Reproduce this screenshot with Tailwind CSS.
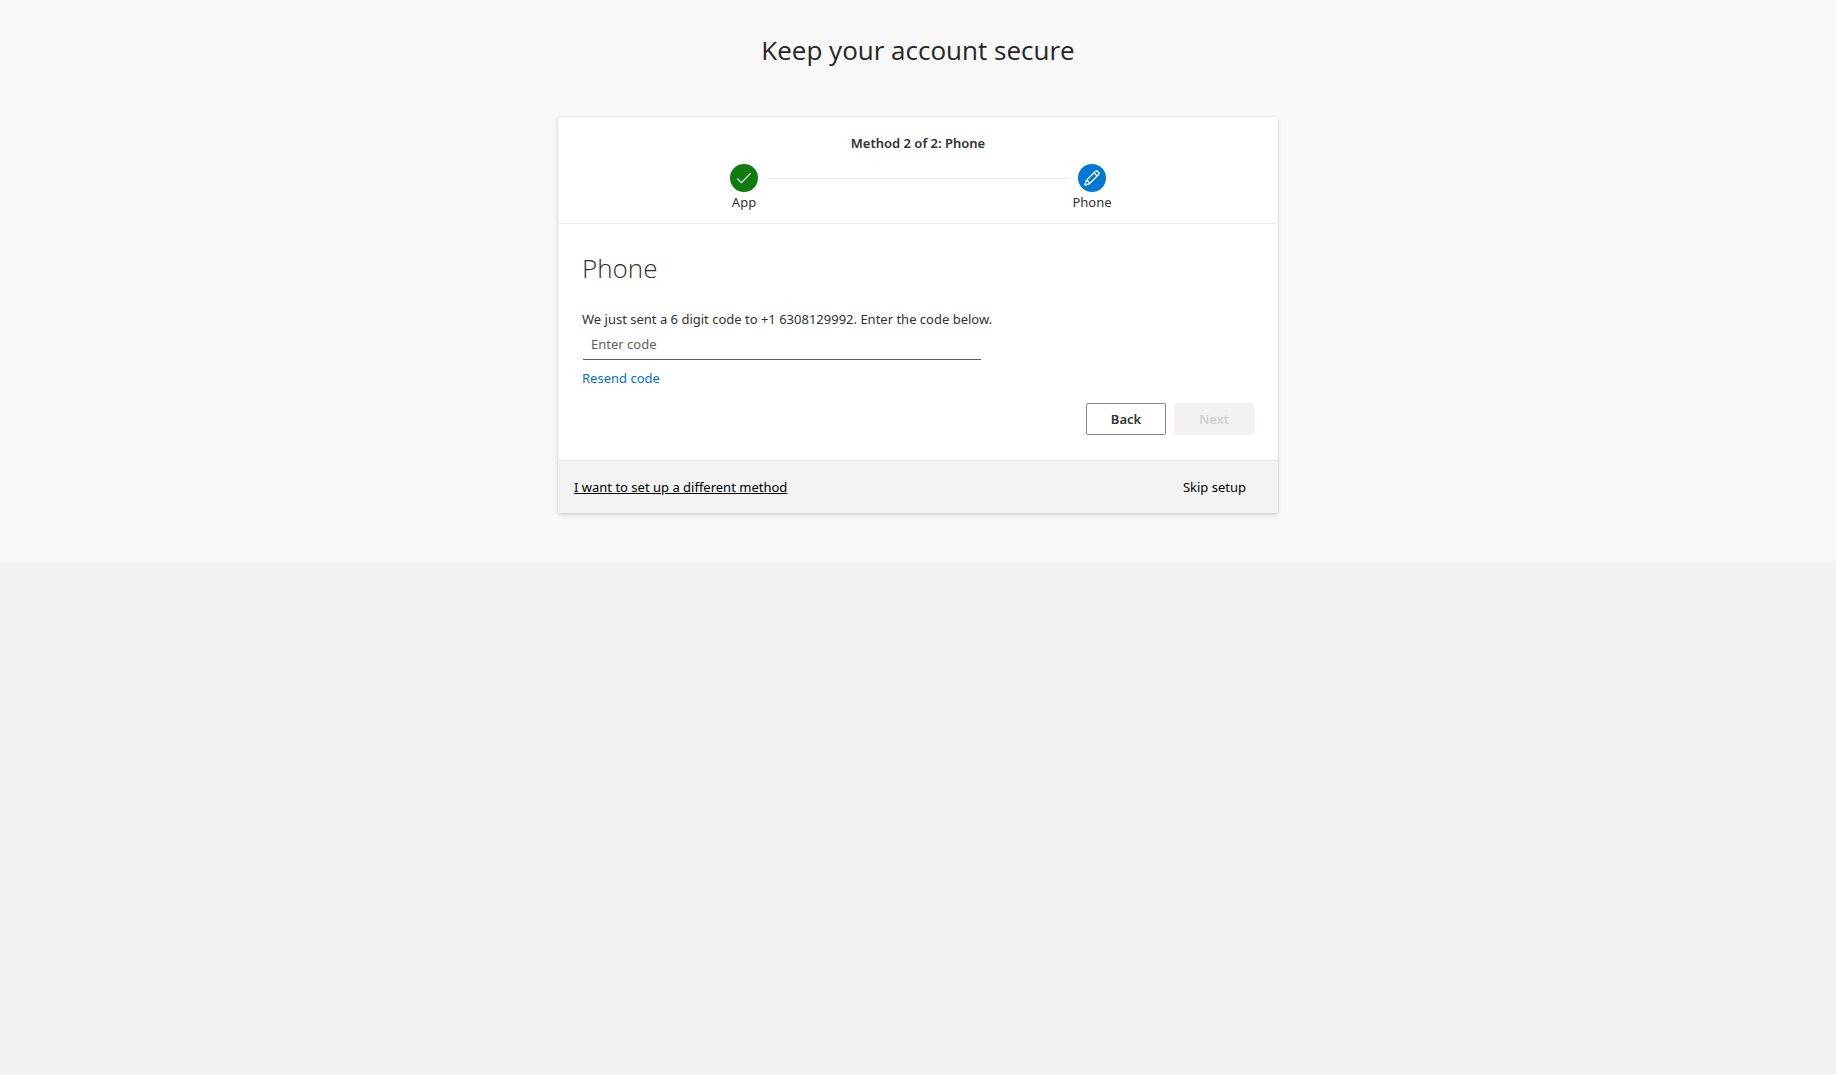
<!DOCTYPE html>
<html lang="en">
<head>
  <meta charset="UTF-8" />
  <meta name="viewport" content="width=device-width, initial-scale=1.0" />
  <title>Keep your account secure</title>
  <script src="https://cdn.jsdelivr.net/npm/@tailwindcss/browser@4"></script>
</head>
<body class="bg-[#f2f2f2] min-h-screen font-['Segoe_UI','Noto_Sans','Open_Sans',sans-serif] text-[13px] leading-5 text-[#323130]">
  <main class="bg-[#f8f8f8] px-4 pt-8 pb-12">
    <h1 class="text-center font-['Segoe_UI','Open_Sans',sans-serif] text-[26px] leading-9 text-[#262626]">Keep your account secure</h1>

    <!-- Wizard card -->
    <div class="mx-auto mt-[49px] max-w-[720px] bg-white rounded-xs shadow-[0_2px_4px_rgba(0,0,0,0.13),0_0_2px_rgba(0,0,0,0.11)]">
      <!-- Progress -->
      <div class="pt-4 pb-[11px] border-b border-[#eaeaea]">
        <h2 class="text-center text-[13px] font-semibold">Method 2 of 2: Phone</h2>
        <ol class="mt-[11px] flex justify-center gap-0.5">
          <li class="w-10 flex flex-col items-center">
            <span class="w-7 h-7 rounded-full bg-[#107c10] flex items-center justify-center">
              <svg class="w-4 h-4" viewBox="0 0 16 16" fill="none" stroke="white" stroke-width="1.1" aria-hidden="true"><path d="M1.2 8.4L5.4 12.6L14.8 3.2" /></svg>
            </span>
            <span>App</span>
          </li>
          <li class="flex-1 max-w-[304px] h-px mt-3.5 bg-[#eaeaea]" aria-hidden="true"></li>
          <li class="w-10 flex flex-col items-center" aria-current="step">
            <span class="w-7 h-7 rounded-full bg-[#0078d4] flex items-center justify-center">
              <svg class="w-4 h-4" viewBox="0 0 16 16" fill="none" stroke="white" stroke-width="1.3" stroke-linejoin="round" aria-hidden="true"><path d="M1 15L2.2 10.6L11 1.8A2.2 2.2 0 0 1 14.2 5L5.4 13.8ZM2.2 10.6C3.8 10.5 5.5 12.2 5.4 13.8M10 2.8L13.2 6" /></svg>
            </span>
            <span>Phone</span>
          </li>
        </ol>
      </div>

      <!-- Code form -->
      <form class="px-6 pt-6 pb-[25px]">
        <h2 class="font-['Segoe_UI','Open_Sans',sans-serif] text-[26px] leading-10 font-light">Phone</h2>
        <label for="code" class="block mt-[21px]">We just sent a 6 digit code to +1 6308129992. Enter the code below.</label>
        <input type="text" id="code" name="code" placeholder="Enter code"
          class="block w-full max-w-[398px] h-[31px] ml-px px-2 border-b border-[#605e5c] placeholder:text-[#605e5c] focus:outline-none focus:border-[#0078d4]" />
        <a href="#" class="inline-block mt-2 text-[#0072c9] hover:underline">Resend code</a>
        <div class="mt-[15px] flex justify-end gap-2">
          <button type="button" class="w-20 h-8 rounded-xs border border-[#8a8886] bg-white font-semibold">Back</button>
          <button type="submit" disabled class="w-20 h-8 rounded-xs bg-[#f3f2f1] text-[#d2d0ce] font-semibold">Next</button>
        </div>
      </form>

      <!-- Footer links -->
      <div class="bg-[#f3f3f3] border-t border-[#e6e6e6] pl-4 pr-8 py-4 flex items-center justify-between text-black rounded-b-xs">
        <a href="#" class="underline">I want to set up a different method</a>
        <a href="#" class="hover:underline">Skip setup</a>
      </div>
    </div>
  </main>
</body>
</html>
